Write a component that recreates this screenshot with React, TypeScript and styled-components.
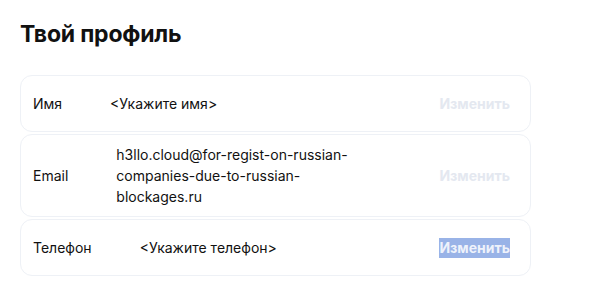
import React from "react";
import styled, { createGlobalStyle } from "styled-components";

const GlobalStyle = createGlobalStyle`
  body {
    margin: 0;
    background: #ffffff;
    font-family: Inter, "Noto Sans", sans-serif;
    color: #111111;
  }
`;

const Page = styled.div`
  padding: 20px;
  width: 511px;
`;

const Title = styled.h1`
  margin: 0 0 27px;
  font-size: 23px;
  font-weight: 700;
  line-height: normal;
  letter-spacing: -0.2px;
`;

const List = styled.div`
  display: flex;
  flex-direction: column;
  gap: 2px;
`;

const Card = styled.div`
  display: flex;
  align-items: center;
  min-height: 57px;
  padding: 9px 20px 9px 12px;
  border: 1px solid #eef1f6;
  border-radius: 12px;
  box-sizing: border-box;
  font-size: 14px;
  line-height: 21px;
`;

const Label = styled.span`
  flex: none;
  margin-right: 48px;
`;

const Value = styled.span`
  flex: none;
  max-width: 240px;
`;

const Spacer = styled.div`
  flex: 1;
`;

const EditButton = styled.button<{ $selected?: boolean }>`
  border: 0;
  padding: 0;
  font-family: inherit;
  font-size: 14px;
  font-weight: 700;
  line-height: 20px;
  cursor: pointer;
  color: ${(p) => (p.$selected ? "#eef2fb" : "#e4e8f0")};
  background: ${(p) => (p.$selected ? "#99b3e7" : "transparent")};
`;

const rows = [
  { label: "Имя", value: "<Укажите имя>" },
  { label: "Email", value: "h3llo.cloud@for-regist-on-russian-companies-due-to-russian-blockages.ru" },
  { label: "Телефон", value: "<Укажите телефон>", selected: true },
];

export default function App() {
  return (
    <>
      <GlobalStyle />
      <Page>
        <Title>Твой профиль</Title>
        <List>
          {rows.map((r) => (
            <Card key={r.label}>
              <Label>{r.label}</Label>
              <Value>{r.value}</Value>
              <Spacer />
              <EditButton $selected={r.selected}>Изменить</EditButton>
            </Card>
          ))}
        </List>
      </Page>
    </>
  );
}
